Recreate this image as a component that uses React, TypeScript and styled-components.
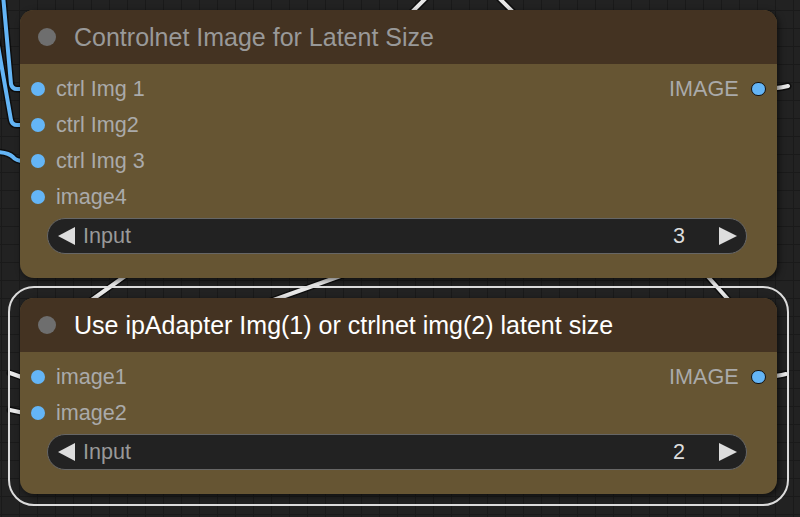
import React from "react";
import styled, { createGlobalStyle, css } from "styled-components";

const Global = createGlobalStyle`
  html, body { margin: 0; padding: 0; background: #222; }
  body { font-family: "Liberation Sans", Arial, sans-serif; }
`;

const Canvas = styled.div`
  position: relative;
  width: 800px;
  height: 517px;
  overflow: hidden;
  box-sizing: border-box;
  padding: 10px 0 0 20px;
  display: flex;
  flex-direction: column;
  gap: 20px;
  background-color: #222;
  background-image: linear-gradient(#1a1a1a 1px, transparent 1px),
    linear-gradient(90deg, #1a1a1a 1px, transparent 1px);
  background-size: 18px 18px;
  background-position: 1px 10px;
`;

const Links = styled.svg`
  position: absolute;
  left: 0;
  top: 0;
  width: 800px;
  height: 517px;
  pointer-events: none;
`;

const Node = styled.div<{ $selected?: boolean }>`
  position: relative;
  z-index: 1;
  width: 757px;
  border-radius: 14px;
  background: #665533;
  box-shadow: 2px 2px 6px rgba(0, 0, 0, 0.55);
  ${(p) =>
    p.$selected &&
    css`
      outline: 2px solid #dcdcdc;
      outline-offset: 10px;
    `}
`;

const Header = styled.div`
  height: 54px;
  display: flex;
  align-items: center;
  gap: 18.5px;
  padding-left: 17.5px;
  background: #443322;
  border-radius: 14px 14px 0 0;
`;

const TitleDot = styled.span`
  flex: none;
  width: 18px;
  height: 18px;
  border-radius: 50%;
  background: #6e6e6e;
`;

const Title = styled.span<{ $selected?: boolean }>`
  font-size: 25px;
  white-space: nowrap;
  color: ${(p) => (p.$selected ? "#ffffff" : "#999999")};
`;

const Body = styled.div`
  display: flex;
  flex-direction: column;
  padding: 7px 0 24px;
`;

const SlotRow = styled.div`
  height: 36px;
  display: flex;
  align-items: center;
  justify-content: space-between;
  padding: 0 11.5px 0 10.8px;
`;

const Slot = styled.div<{ $out?: boolean }>`
  display: flex;
  align-items: center;
  flex-direction: ${(p) => (p.$out ? "row-reverse" : "row")};
  gap: ${(p) => (p.$out ? "12.5px" : "10.8px")};
  font-size: 21.6px;
  color: #aaaaaa;
  white-space: nowrap;
`;

const SlotDot = styled.span<{ $out?: boolean }>`
  flex: none;
  box-sizing: border-box;
  width: 14.4px;
  height: 14.4px;
  border-radius: 50%;
  background: #64b5f6;
  ${(p) => p.$out && "border: 1.5px solid #111;"}
`;

const Widget = styled.div`
  margin: 3px 30px 0 27px;
  height: 36px;
  box-sizing: border-box;
  display: flex;
  align-items: center;
  padding: 0 9px 0 10px;
  border: 1px solid #666;
  border-radius: 18px;
  background: #222222;
  font-size: 21.6px;
`;

const Arrow = styled.span<{ $dir: "left" | "right" }>`
  flex: none;
  width: 0;
  height: 0;
  border-top: 9px solid transparent;
  border-bottom: 9px solid transparent;
  ${(p) =>
    p.$dir === "left"
      ? "border-right: 17px solid #dddddd;"
      : "border-left: 18px solid #dddddd;"}
`;

const WidgetLabel = styled.span`
  flex: 1;
  margin-left: 8px;
  color: #999999;
`;

const WidgetValue = styled.span`
  margin-right: 34px;
  color: #dddddd;
`;

type LinkProps = { d: string; color: string };
const Link = ({ d, color }: LinkProps) => (
  <g fill="none" strokeLinecap="round" strokeLinejoin="round">
    <path d={d} stroke="rgba(0,0,0,0.6)" strokeWidth={7} />
    <path d={d} stroke={color} strokeWidth={4} />
  </g>
);

type NodeData = {
  title: string;
  selected?: boolean;
  inputs: string[];
  output: string;
  value: number;
};

const nodes: NodeData[] = [
  {
    title: "Controlnet Image for Latent Size",
    inputs: ["ctrl Img 1", "ctrl Img2", "ctrl Img 3", "image4"],
    output: "IMAGE",
    value: 3,
  },
  {
    title: "Use ipAdapter Img(1) or ctrlnet img(2) latent size",
    selected: true,
    inputs: ["image1", "image2"],
    output: "IMAGE",
    value: 2,
  },
];

const GraphNode = ({ data }: { data: NodeData }) => (
  <Node $selected={data.selected}>
    <Header>
      <TitleDot />
      <Title $selected={data.selected}>{data.title}</Title>
    </Header>
    <Body>
      {data.inputs.map((name, i) => (
        <SlotRow key={name}>
          <Slot>
            <SlotDot />
            {name}
          </Slot>
          {i === 0 && (
            <Slot $out>
              <SlotDot $out />
              {data.output}
            </Slot>
          )}
        </SlotRow>
      ))}
      <Widget>
        <Arrow $dir="left" />
        <WidgetLabel>Input</WidgetLabel>
        <WidgetValue>{data.value}</WidgetValue>
        <Arrow $dir="right" />
      </Widget>
    </Body>
  </Node>
);

export default function App() {
  const blue = "#64b5f6";
  const white = "#e8e8e8";
  return (
    <>
      <Global />
      <Canvas>
        <Links viewBox="0 0 800 517">
          <Link color={blue} d="M 3 -5 L 11 84 Q 12 89 17 89 L 24 89" />
          <Link color={blue} d="M -3 40 L 11 120 Q 12 125 17 125 L 24 125" />
          <Link color={blue} d="M -5 152 Q 8 152 13 157 Q 16 161 24 161" />
          <Link color={white} d="M 400 24 L 430 -6" />
          <Link color={white} d="M 495 -6 L 525 24" />
          <Link color={white} d="M 86 304 L 128 274" />
          <Link color={white} d="M 268 302 L 346 274" />
          <Link color={white} d="M 702 270 L 734 306" />
          <Link color={white} d="M 760 89 Q 776 89 788 86" />
          <Link color={white} d="M 760 378 Q 778 376 786 374" />
          <Link color={white} d="M 10 373 L 24 378" />
          <Link color={white} d="M 10 410 L 24 413" />
        </Links>
        {nodes.map((n) => (
          <GraphNode key={n.title} data={n} />
        ))}
      </Canvas>
    </>
  );
}
